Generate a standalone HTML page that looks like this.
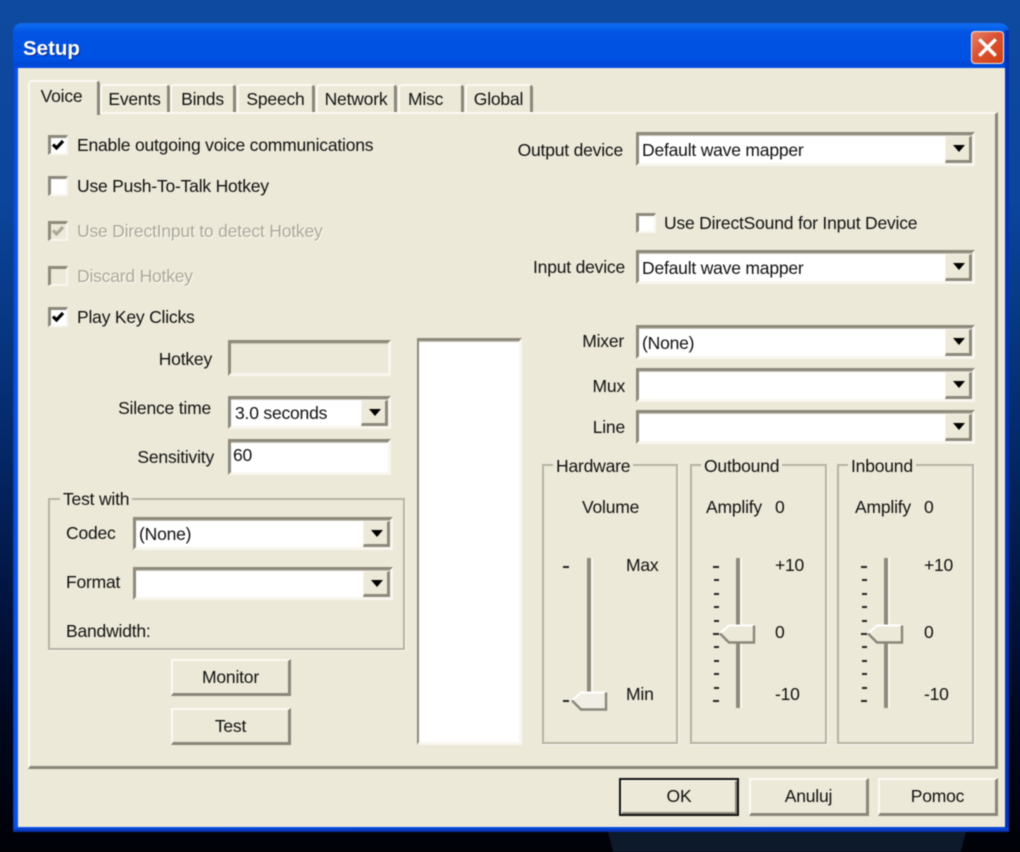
<!DOCTYPE html>
<html><head><meta charset="utf-8"><title>Setup</title>
<style>
html,body{margin:0;padding:0}
body{width:1020px;height:852px;position:relative;overflow:hidden;background:linear-gradient(180deg,#0e4a9f 0,#0b459c 200px,#06367f 340px,#032460 480px,#021440 600px,#00081f 720px,#00020a 832px,#000208 852px);font-family:"Liberation Sans",sans-serif;font-size:17.5px;letter-spacing:-.2px;color:#111}
#all{position:absolute;left:0;top:0;width:1020px;height:852px;filter:blur(.5px)}
#all div,#all span,#all svg{position:absolute;box-sizing:border-box}
.t{white-space:nowrap;line-height:20px;height:20px}
.r{text-align:right}
.c{text-align:center}
.d{color:#aca899;text-shadow:1px 1px 0 #fbfaf4}
.f{background:#fff;border-top:3px solid #8d8a7c;border-left:3px solid #8d8a7c;border-right:3px solid #f8f6ee;border-bottom:3px solid #f8f6ee;box-shadow:inset 0 1px 0 #c9c6b8}
.dd{width:27px;background:#ece9d8;border-top:1px solid #f5f3ea;border-left:1px solid #f5f3ea;border-right:3px solid #8d8a7c;border-bottom:3px solid #8d8a7c}
.dd i{position:absolute;left:7px;top:8px;width:0;height:0;border-left:6px solid transparent;border-right:6px solid transparent;border-top:7px solid #000}
.b{background:#ece9d8;border-top:2px solid #fbfaf4;border-left:2px solid #fbfaf4;border-right:3px solid #8a877a;border-bottom:3px solid #8a877a;text-align:center;line-height:32px}
.g{border:2px solid #b6b3a4;box-shadow:1px 1px 0 #fbfaf4}
.l{background:#ece9d8;padding:0 3px;white-space:nowrap;line-height:20px;height:20px}
.tab{background:#ece9d8;border-top:2px solid #fbfaf4;border-left:2px solid #fbfaf4;border-right:3px solid #8a877a;border-radius:4px 4px 0 0;height:28px;top:84px;line-height:24px;padding-top:1px}
.cb{width:20px;height:20px;background:#fff;border-top:3px solid #8d8a7c;border-left:3px solid #8d8a7c;border-right:2px solid #f8f6ee;border-bottom:2px solid #f8f6ee}
.cb.x{background:#ece9d8}
.tick{background:#222;height:2px;width:6px}
</style></head><body><div id="all">
<div style="left:608px;top:832px;width:358px;height:20px;background:#0d1a2b;clip-path:polygon(0 0,100% 0,98.5% 100%,1.5% 100%)"></div>

<!-- window -->
<div style="left:13px;top:23px;width:996px;height:809px;border-radius:9px 9px 0 0;background:linear-gradient(90deg,#0a3fc0 0,#0d55ea 3px,#0050e0 50%,#0040d0 100%)"></div>
<div style="left:13px;top:23px;width:996px;height:45px;border-radius:9px 9px 0 0;background:linear-gradient(180deg,#1268e8 0,#0a6af0 3px,#0454e4 9px,#0053e2 20px,#0052e4 36px,#0048d4 41px,#0050e4 45px)"></div>
<div style="left:1005px;top:30px;width:4px;height:802px;background:#0033b8"></div>
<div style="left:13px;top:828px;width:996px;height:4px;background:linear-gradient(180deg,#0a4ae0,#0a2a9c)"></div>
<div style="left:18px;top:68px;width:987px;height:759px;background:#ece9d8"></div>
<div class="t" style="left:23px;top:37px;height:24px;line-height:24px;font-size:20.5px;letter-spacing:0;font-weight:bold;color:#fff;text-shadow:1px 1px 1px #0a2a8c">Setup</div>

<!-- close -->
<div style="left:971px;top:31px;width:33px;height:33px;border:1px solid #f4e8e0;border-radius:4px;background:linear-gradient(135deg,#e8806a 0,#da5232 45%,#d04010 100%)"></div>
<svg style="left:971px;top:31px" width="33" height="33" viewBox="0 0 33 33"><path d="M9.5 9.5L23.5 23.5M23.5 9.5L9.5 23.5" stroke="#fff" stroke-width="3.4" stroke-linecap="square" fill="none"/></svg>

<!-- tab panel -->
<div style="left:28px;top:112px;width:970px;height:657px;background:#ece9d8;border-top:2px solid #fbfaf4;border-left:2px solid #fbfaf4;border-right:3px solid #8a877a;border-bottom:3px solid #8a877a"></div>

<div class="tab c" style="left:100px;width:70px">Events</div>
<div class="tab c" style="left:170px;width:66px">Binds</div>
<div class="tab c" style="left:237px;width:78px">Speech</div>
<div class="tab c" style="left:316px;width:81px">Network</div>
<div class="tab" style="left:398px;width:66px;padding-left:8px">Misc</div>
<div class="tab c" style="left:465px;width:68px">Global</div>
<div class="tab c" style="left:28px;top:80px;width:72px;height:35px;line-height:24px;padding-top:2px;border-bottom:0;padding-right:4px">Voice</div>

<!-- left checks -->
<div class="cb" style="left:48px;top:135px"></div>
<svg style="left:48px;top:135px" width="20" height="20"><path d="M5 9.5L8.5 13L15 6" stroke="#000" stroke-width="3.2" fill="none"/></svg>
<div class="t" style="left:77px;top:135px">Enable outgoing voice communications</div>
<div class="cb" style="left:48px;top:176px"></div>
<div class="t" style="left:77px;top:176px">Use Push-To-Talk Hotkey</div>
<div class="cb x" style="left:48px;top:221px"></div>
<svg style="left:48px;top:221px" width="20" height="20"><path d="M5 9.5L8.5 13L15 6" stroke="#aca899" stroke-width="3.2" fill="none"/></svg>
<div class="t d" style="left:77px;top:221px">Use DirectInput to detect Hotkey</div>
<div class="cb x" style="left:48px;top:266px"></div>
<div class="t d" style="left:77px;top:266px">Discard Hotkey</div>
<div class="cb" style="left:48px;top:307px"></div>
<svg style="left:48px;top:307px" width="20" height="20"><path d="M5 9.5L8.5 13L15 6" stroke="#000" stroke-width="3.2" fill="none"/></svg>
<div class="t" style="left:77px;top:307px">Play Key Clicks</div>

<!-- left fields -->
<div class="t r" style="left:100px;width:112px;top:349px">Hotkey</div>
<div class="f" style="left:228px;top:340px;width:163px;height:36px;background:#ece9d8"></div>
<div class="t r" style="left:80px;width:131px;top:398px">Silence time</div>
<div class="f" style="left:228px;top:396px;width:163px;height:33px"></div>
<div class="dd" style="left:361px;top:400px;height:26px;width:27px"><i></i></div>
<div class="t" style="left:235px;top:403px">3.0 seconds</div>
<div class="t r" style="left:80px;width:134px;top:447px">Sensitivity</div>
<div class="f" style="left:228px;top:439px;width:163px;height:36px"></div>
<div class="t" style="left:233px;top:445px">60</div>

<!-- test with -->
<div class="g" style="left:48px;top:498px;width:357px;height:152px"></div>
<div class="l" style="left:60px;top:489px">Test with</div>
<div class="t" style="left:66px;top:523px">Codec</div>
<div class="f" style="left:133px;top:517px;width:260px;height:33px"></div>
<div class="dd" style="left:363px;top:521px;height:26px"><i></i></div>
<div class="t" style="left:139px;top:524px">(None)</div>
<div class="t" style="left:66px;top:572px">Format</div>
<div class="f" style="left:133px;top:567px;width:260px;height:33px"></div>
<div class="dd" style="left:363px;top:571px;height:26px"><i></i></div>
<div class="t" style="left:66px;top:621px">Bandwidth:</div>
<div class="b" style="left:171px;top:659px;width:120px;height:37px">Monitor</div>
<div class="b" style="left:171px;top:708px;width:120px;height:37px;line-height:33px">Test</div>

<!-- white box -->
<div class="f" style="left:417px;top:338px;width:105px;height:407px;border-top:3px solid #8d8a7c;border-left:2px solid #8d8a7c"></div>

<!-- right -->
<div class="t r" style="left:480px;width:143px;top:140px">Output device</div>
<div class="f" style="left:636px;top:132px;width:339px;height:34px"></div>
<div class="dd" style="left:945px;top:136px;height:27px"><i></i></div>
<div class="t" style="left:642px;top:140px">Default wave mapper</div>
<div class="cb" style="left:636px;top:213px"></div>
<div class="t" style="left:664px;top:213px">Use DirectSound for Input Device</div>
<div class="t r" style="left:480px;width:145px;top:257px">Input device</div>
<div class="f" style="left:636px;top:250px;width:339px;height:34px"></div>
<div class="dd" style="left:945px;top:254px;height:27px"><i></i></div>
<div class="t" style="left:642px;top:258px">Default wave mapper</div>
<div class="t r" style="left:540px;width:84px;top:331px">Mixer</div>
<div class="f" style="left:636px;top:325px;width:339px;height:34px"></div>
<div class="dd" style="left:945px;top:329px;height:27px"><i></i></div>
<div class="t" style="left:642px;top:333px">(None)</div>
<div class="t r" style="left:540px;width:85px;top:376px">Mux</div>
<div class="f" style="left:636px;top:368px;width:339px;height:34px"></div>
<div class="dd" style="left:945px;top:372px;height:27px"><i></i></div>
<div class="t r" style="left:540px;width:85px;top:417px">Line</div>
<div class="f" style="left:636px;top:410px;width:339px;height:34px"></div>
<div class="dd" style="left:945px;top:414px;height:27px"><i></i></div>

<!-- groups -->
<div class="g" style="left:542px;top:464px;width:136px;height:280px"></div>
<div class="l" style="left:553px;top:456px">Hardware</div>
<div class="g" style="left:690px;top:464px;width:137px;height:280px"></div>
<div class="l" style="left:701px;top:456px">Outbound</div>
<div class="g" style="left:837px;top:464px;width:137px;height:280px"></div>
<div class="l" style="left:848px;top:456px">Inbound</div>

<div class="t" style="left:582px;top:497px">Volume</div>
<div class="t" style="left:626px;top:555px">Max</div>
<div class="t" style="left:626px;top:684px">Min</div>
<div class="t" style="left:706px;top:497px">Amplify</div>
<div class="t" style="left:775px;top:497px">0</div>
<div class="t" style="left:775px;top:555px">+10</div>
<div class="t" style="left:775px;top:622px">0</div>
<div class="t" style="left:775px;top:684px">-10</div>
<div class="t" style="left:855px;top:497px">Amplify</div>
<div class="t" style="left:924px;top:497px">0</div>
<div class="t" style="left:924px;top:555px">+10</div>
<div class="t" style="left:924px;top:622px">0</div>
<div class="t" style="left:924px;top:684px">-10</div>

<!-- sliders -->
<div style="left:587px;top:558px;width:6px;height:150px;background:#8d8a7c;border-right:2px solid #fbfaf4"></div>
<div style="left:736px;top:558px;width:6px;height:150px;background:#8d8a7c;border-right:2px solid #fbfaf4"></div>
<div style="left:884px;top:558px;width:6px;height:150px;background:#8d8a7c;border-right:2px solid #fbfaf4"></div>

<div class="tick" style="left:563px;top:566px"></div>
<div class="tick" style="left:563px;top:700px"></div>

<div class="tick" style="left:713px;top:566px"></div><div class="tick" style="left:714px;top:579px;width:5px"></div><div class="tick" style="left:714px;top:593px;width:5px"></div><div class="tick" style="left:714px;top:606px;width:5px"></div><div class="tick" style="left:714px;top:620px;width:5px"></div><div class="tick" style="left:713px;top:633px"></div><div class="tick" style="left:714px;top:646px;width:5px"></div><div class="tick" style="left:714px;top:660px;width:5px"></div><div class="tick" style="left:714px;top:673px;width:5px"></div><div class="tick" style="left:714px;top:687px;width:5px"></div><div class="tick" style="left:713px;top:700px"></div>

<div class="tick" style="left:861px;top:566px"></div><div class="tick" style="left:862px;top:579px;width:5px"></div><div class="tick" style="left:862px;top:593px;width:5px"></div><div class="tick" style="left:862px;top:606px;width:5px"></div><div class="tick" style="left:862px;top:620px;width:5px"></div><div class="tick" style="left:861px;top:633px"></div><div class="tick" style="left:862px;top:646px;width:5px"></div><div class="tick" style="left:862px;top:660px;width:5px"></div><div class="tick" style="left:862px;top:673px;width:5px"></div><div class="tick" style="left:862px;top:687px;width:5px"></div><div class="tick" style="left:861px;top:700px"></div>

<svg style="left:571px;top:691px" width="37" height="20"><path d="M1 9.5L10 1.5H35V18.5H10Z" fill="#f1efe5"/><path d="M1 9.5L10 1.5H35" stroke="#fff" stroke-width="2" fill="none"/><path d="M35 1.5V18.5H10L1 9.5" stroke="#8a877a" stroke-width="2.4" fill="none"/></svg>
<svg style="left:719px;top:624px" width="37" height="20"><path d="M1 9.5L10 1.5H35V18.5H10Z" fill="#ece9d8"/><path d="M1 9.5L10 1.5H35" stroke="#fff" stroke-width="2" fill="none"/><path d="M35 1.5V18.5H10L1 9.5" stroke="#8a877a" stroke-width="2.4" fill="none"/></svg>
<svg style="left:867px;top:624px" width="37" height="20"><path d="M1 9.5L10 1.5H35V18.5H10Z" fill="#ece9d8"/><path d="M1 9.5L10 1.5H35" stroke="#fff" stroke-width="2" fill="none"/><path d="M35 1.5V18.5H10L1 9.5" stroke="#8a877a" stroke-width="2.4" fill="none"/></svg>

<!-- bottom buttons -->
<div class="b" style="left:619px;top:778px;width:120px;height:38px;outline:0;border:2px solid #111;box-shadow:inset 1px 1px 0 #fbfaf4,inset -2px -2px 0 #8a877a;line-height:33px">OK</div>
<div class="b" style="left:749px;top:778px;width:120px;height:38px;line-height:32px">Anuluj</div>
<div class="b" style="left:878px;top:778px;width:120px;height:38px;line-height:32px">Pomoc</div>
</div></body></html>
